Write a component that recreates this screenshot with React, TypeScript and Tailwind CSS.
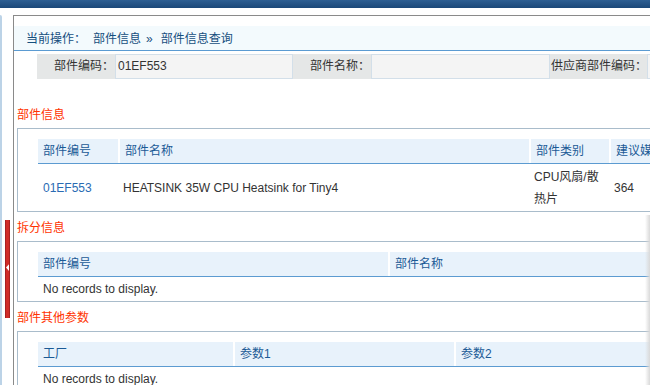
import React from "react";

const HeadCell = ({ w, first, children }: { w?: string; first?: boolean; children?: React.ReactNode }) => (
  <div className={`${w ?? "flex-1"} ${first ? "" : "border-l-2 border-white"} pl-[5px] leading-[24px] h-[24px] text-[#1b5a96] whitespace-nowrap`}>
    {children}
  </div>
);

const Title = ({ children, first }: { children: React.ReactNode; first?: boolean }) => (
  <div className={`${first ? "mt-[24px] h-[25px]" : "h-[29px] pt-[4px]"} leading-[25px] pl-[3px] text-[#ff3300]`}>{children}</div>
);

export default function App() {
  return (
    <div
      className="w-[650px] h-[385px] overflow-hidden bg-white relative text-[12px] text-[#333]"
      style={{ fontFamily: '"Liberation Sans", "Noto Sans CJK SC", sans-serif' }}
    >
      <div className="h-[8px] bg-gradient-to-b from-[#2e5f93] to-[#1b4879]" />
      <div className="flex mt-[7px] h-[370px]">
        <div className="w-[13px] shrink-0 flex">
          <div className="w-[2px] bg-[#bcd3e7] rounded-tr-[2px]" />
          <div className="ml-[3px] pt-[205px]">
            <div className="w-[5px] h-[98px] bg-[#d02c28] border-x border-[#a82020] flex items-center justify-center">
              <svg width="4" height="9" viewBox="0 0 4 9" className="mb-[3px]">
                <polygon points="4,0 0,4.5 4,9" fill="#ffffff" />
              </svg>
            </div>
          </div>
        </div>
        <div className="flex-1 min-w-0 border-t border-l border-[#8a8a8a] overflow-hidden">
          <div className="w-[760px]">
            <div className="mt-[10px] h-[25px] bg-[#f3fafd] border-b border-[#5b9bd2] pl-[12px] leading-[26px] text-[#164f7e] flex whitespace-nowrap">
              <span>当前操作：</span>
              <span className="ml-[7px]">部件信息</span>
              <span className="ml-[5px]">»</span>
              <span className="ml-[8px]">部件信息查询</span>
            </div>
            <div className="mt-[3px] pl-[23px] flex h-[25px] whitespace-nowrap">
              <div className="w-[78px] shrink-0 bg-[#e5e7e7] text-right leading-[25px] pr-[1px]">部件编码：</div>
              <div className="w-[178px] shrink-0 border border-[#d3dfe9] bg-[#f4f4f4] pl-[2px] leading-[23px]">01EF553</div>
              <div className="w-[78px] shrink-0 bg-[#e5e7e7] text-right leading-[25px] pr-[1px]">部件名称：</div>
              <div className="w-[179px] shrink-0 border border-[#d3dfe9] bg-[#f4f4f4]" />
              <div className="w-[97px] shrink-0 bg-[#e5e7e7] leading-[25px] pl-[1px]">供应商部件编码：</div>
              <div className="w-[150px] shrink-0 border border-[#d3dfe9] bg-[#f4f4f4]" />
            </div>

            <Title first>部件信息</Title>
            <div className="ml-[3px] border-t border-l border-b border-[#a9bccb] pt-[10px] pl-[20px]">
              <div className="flex bg-[#e8f2fb] border-b border-[#5c9bd1]">
                <HeadCell w="w-[80px]" first>部件编号</HeadCell>
                <HeadCell w="w-[411px]">部件名称</HeadCell>
                <HeadCell w="w-[80px]">部件类别</HeadCell>
                <HeadCell>建议媒体</HeadCell>
              </div>
              <div className="flex h-[47px] items-center">
                <div className="w-[80px] pl-[5px] text-[#2a6bb3]">01EF553</div>
                <div className="w-[411px] pl-[5px]">HEATSINK 35W CPU Heatsink for Tiny4</div>
                <div className="w-[80px] pl-[5px] pr-[2px] leading-[22px]">CPU风扇/散热片</div>
                <div className="flex-1 pl-[5px]">364</div>
              </div>
            </div>

            <Title>拆分信息</Title>
            <div className="ml-[3px] border-t border-l border-b border-[#a9bccb] pt-[10px] pl-[20px]">
              <div className="flex bg-[#e8f2fb] border-b border-[#5c9bd1]">
                <HeadCell w="w-[350px]" first>部件编号</HeadCell>
                <HeadCell>部件名称</HeadCell>
              </div>
              <div className="h-[24px] leading-[24px] pl-[5px]">No records to display.</div>
            </div>

            <Title>部件其他参数</Title>
            <div className="ml-[3px] border-t border-l border-b border-[#a9bccb] pt-[10px] pl-[20px]">
              <div className="flex bg-[#e8f2fb] border-b border-[#5c9bd1]">
                <HeadCell w="w-[195px]" first>工厂</HeadCell>
                <HeadCell w="w-[221px]">参数1</HeadCell>
                <HeadCell>参数2</HeadCell>
              </div>
              <div className="h-[24px] leading-[24px] pl-[5px]">No records to display.</div>
            </div>
          </div>
        </div>
      </div>
      <div className="absolute right-0 top-[215px] w-[5px] h-[170px] bg-gradient-to-r from-transparent to-[#d9d9d9]" />
    </div>
  );
}
